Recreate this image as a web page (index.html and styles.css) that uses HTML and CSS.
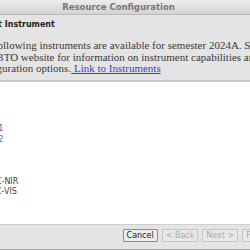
FILE: index.html
```html
<!DOCTYPE html>
<html lang="en">
<head>
    <meta charset="UTF-8">
    <title>Resource Configuration</title>
    <link rel="stylesheet" href="styles.css">
</head>
<body>
    <div class="window">
        <div class="titlebar">Resource Configuration</div>

        <div class="header">
            <div class="step-title">Select Instrument</div>
            <p class="intro">
                The following instruments are available for semester 2024A. See the<br>
                the SBTO website for information on instrument capabilities and<br>
                configuration options.<a href="#" class="link"> Link to Instruments</a>
            </p>
        </div>

        <ul class="instrument-list">
            <li>RSS</li>
            <li>HRS</li>
            <li>BVIT</li>
            <li>SCAM</li>
            <li class="selected">Mode 1</li>
            <li class="secondary">Mode 2</li>
            <li>HRS</li>
            <li>BVIT</li>
            <li>NIR</li>
            <li class="child">WC-NIR</li>
            <li class="child">WC-VIS</li>
        </ul>

        <div class="button-bar">
            <button class="btn">Cancel</button>
            <button class="btn" disabled>&lt; Back</button>
            <button class="btn" disabled>Next &gt;</button>
            <button class="btn" disabled>Finish</button>
        </div>
    </div>
</body>
</html>
```

FILE: styles.css
```css
:root {
    --panel-bg: #e4e4e4;
    --border: #c4c4c4;
    --text: #333333;
    --muted: #a8a8a8;
    --link: #3340d0;
}

html, body {
    margin: 0;
    width: 250px;
    height: 250px;
    overflow: hidden;
}

body {
    font-family: "DejaVu Sans", sans-serif;
    color: var(--text);
    background: var(--panel-bg);
}

.window {
    width: 331px;
    height: 250px;
    margin-left: -47px;
    display: flex;
    flex-direction: column;
    background: var(--panel-bg);
}

.titlebar {
    height: 14px;
    line-height: 15px;
    text-align: center;
    font-weight: bold;
    font-size: 8.5px;
    color: #777777;
    background: linear-gradient(#ededed, #d3d3d3);
    border-bottom: 1px solid #b9b9b9;
}

.header {
    padding: 5px 0 5px 21px;
    border-bottom: 2px solid #c9c9c9;
}

.step-title {
    font-weight: bold;
    font-size: 8px;
    line-height: 10px;
    color: #222222;
}

.intro {
    margin: 10px 0 0;
    font-family: "Liberation Serif", serif;
    font-size: 11px;
    line-height: 11.5px;
    white-space: nowrap;
    color: #3a3a3a;
}

.link {
    color: var(--link);
    text-decoration: underline;
}

.instrument-list {
    flex: 1;
    margin: 0;
    padding: 0.5px 0 0 21px;
    list-style: none;
    background: #ffffff;
    font-size: 8px;
    line-height: 10.5px;
    color: #444444;
}

.instrument-list .child {
    padding-left: 14px;
}

.instrument-list .selected {
    color: #7d3ea6;
}

.instrument-list .secondary {
    color: #5a6784;
}

.button-bar {
    height: 26px;
    display: flex;
    justify-content: flex-end;
    align-items: flex-start;
    gap: 4px;
    padding: 4px 11px 0 0;
    box-sizing: border-box;
    border-top: 1px solid #cfcfcf;
    border-bottom: 1px solid #a9a9a9;
}

.btn {
    height: 13px;
    padding: 0 3px;
    font-family: "DejaVu Sans", sans-serif;
    font-size: 8px;
    line-height: 11px;
    color: #222222;
    background: #ececec;
    border: 1px solid #8c8c8c;
    border-radius: 1px;
}

.btn:disabled {
    color: var(--muted);
    border-color: var(--border);
    background: #e8e8e8;
}
```
